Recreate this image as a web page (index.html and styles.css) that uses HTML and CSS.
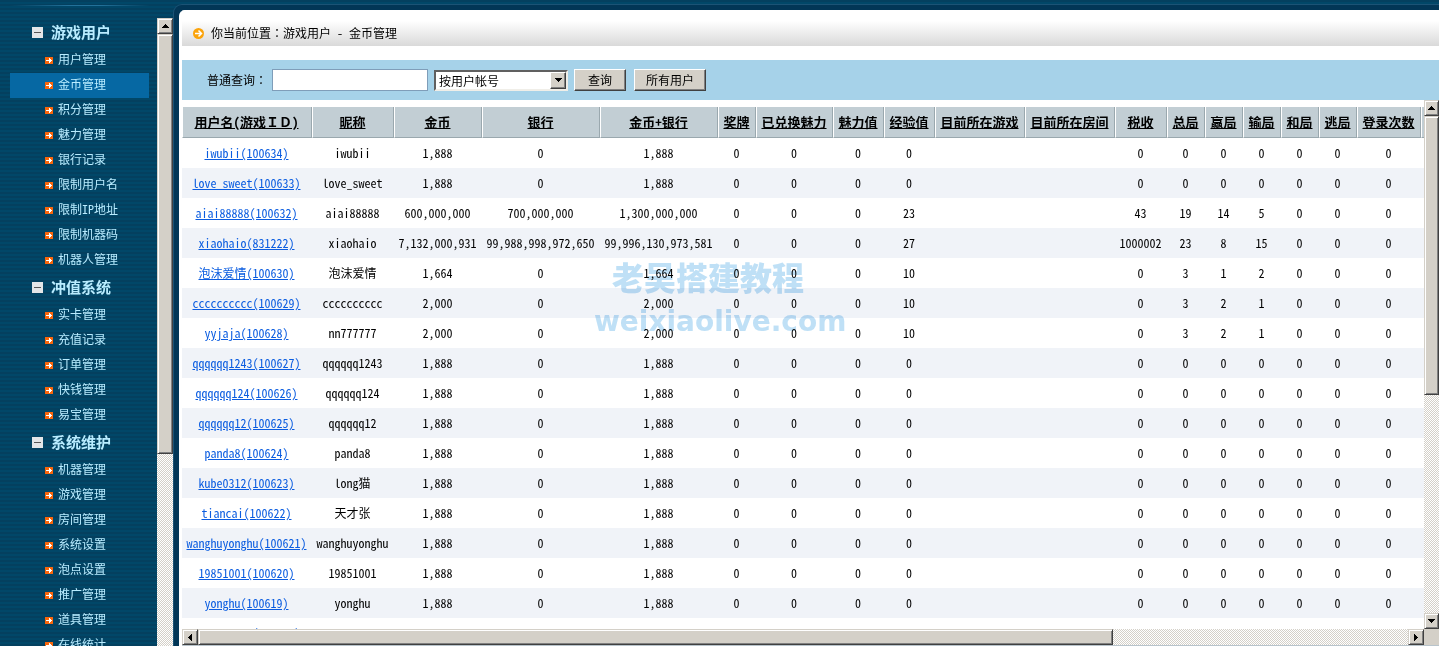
FILE: index.html
```
<!DOCTYPE html>
<html lang="zh-CN">
<head>
<meta charset="utf-8">
<title>金币管理</title>
<link rel="stylesheet" href="styles.css">
</head>
<body>
<div class="app">
  <aside class="sidebar">
    <nav class="menu" id="menu"></nav>
    <div class="vbar side-bar">
      <span class="bar-button"><svg viewBox="0 0 7 4"><path d="M3 0h1v1h1v1h1v1h1v1H0V3h1V2h1V1h1z"/></svg></span>
      <span class="side-thumb thumb"></span>
    </div>
  </aside>
  <div class="frame">
    <main class="page">
      <header class="crumb">
        <svg class="crumb-icon" viewBox="0 0 11 11"><circle cx="5.5" cy="5.5" r="5.5" fill="#fba30a"/><path d="M2 5.5h6M5.5 2.5l3 3-3 3" fill="none" stroke="#fff" stroke-width="1.5"/></svg>
        <span>你当前位置<span class="colon" lang="zh-TW">：</span>游戏用户 - 金币管理</span>
      </header>
      <form class="search" onsubmit="return false">
        <label for="q">普通查询<span class="colon" lang="zh-TW">：</span></label>
        <input class="query" id="q" type="text">
        <span class="picker">
          <select aria-label="查询方式"><option>按用户帐号</option></select>
          <span class="picker-button"><svg viewBox="0 0 7 4"><path d="M0 0h7v1H6v1H5v1H4v1H3V3H2V2H1V1H0z"/></svg></span>
        </span>
        <button class="btn" type="submit">查询</button>
        <button class="btn wide" type="button">所有用户</button>
      </form>
      <section class="pane">
        <div class="sheet">
          <table class="grid">
            <colgroup id="cols"></colgroup>
            <thead><tr id="head"></tr></thead>
            <tbody id="rows"></tbody>
          </table>
        </div>
        <div class="vbar">
          <span class="bar-button"><svg viewBox="0 0 7 4"><path d="M3 0h1v1h1v1h1v1h1v1H0V3h1V2h1V1h1z"/></svg></span>
          <span class="thumb pane-thumb"></span>
          <span class="track"></span>
          <span class="bar-button"><svg viewBox="0 0 7 4"><path d="M0 0h7v1H6v1H5v1H4v1H3V3H2V2H1V1H0z"/></svg></span>
        </div>
        <div class="hbar">
          <span class="bar-button"><svg class="side" viewBox="0 0 4 7"><path d="M4 0v7H3V6H2V5H1V4H0V3h1V2h1V1h1V0z"/></svg></span>
          <span class="thumb wide-thumb"></span>
          <span class="track"></span>
          <span class="bar-button"><svg class="side" viewBox="0 0 4 7"><path d="M0 0v7h1V6h1V5h1V4h1V3H3V2H2V1H1V0z"/></svg></span>
        </div>
        <div class="corner"></div>
      </section>
      <div class="watermark" aria-hidden="true"><span class="mark-name">老吴搭建教程</span><span class="mark-site">weixiaolive.com</span></div>
    </main>
  </div>
</div>
<script src="app.js"></script>
</body>
</html>
```
FILE: styles.css
```
* { box-sizing: border-box; }

body {
  margin: 0;
  overflow: hidden;
  font: 12px/18px "Noto Sans Mono CJK SC", "Noto Sans CJK SC", "Liberation Sans", sans-serif;
  color: #000;
}

.app {
  display: flex;
  height: 100vh;
  overflow: hidden;
  background: repeating-linear-gradient(#04405f 0 2px, #014768 2px 4px);
}
.colon { font-family: "Noto Sans Mono CJK TC", "Noto Sans CJK TC", sans-serif; }

/* sidebar */
.sidebar {
  display: flex;
  flex: none;
  width: 173px;
  padding-top: 18px;
  background: linear-gradient(90deg, transparent 10px, #23719a 70px, #23719a 100px, transparent 150px) 0 5px / 100% 1px no-repeat;
}
.menu { flex: 1; min-width: 0; padding-left: 10px; }
.group {
  display: flex;
  align-items: center;
  gap: 8px;
  height: 30px;
  margin: 0;
  padding: 0 0 2px 22px;
  font-size: 15px;
  color: #b9ecff;
}
.group svg { width: 11px; height: 11px; }
.items { list-style: none; margin: 0; padding: 0; }
.items a {
  display: flex;
  align-items: center;
  gap: 5px;
  width: 139px;
  height: 25px;
  padding: 0 0 3px 35px;
  color: #b9ecff;
  text-decoration: none;
}
.items a.current { background: #0668a3; }
.items svg { width: 8px; height: 7px; margin-top: 3px; }

/* classic scroll bars */
.vbar, .hbar, .track {
  background: repeating-conic-gradient(#fff 0 25%, #d4d0c8 0 50%) 0 0 / 2px 2px;
}
.vbar { display: flex; flex-direction: column; width: 15px; }
.side-bar { width: 16px; }
.hbar { display: flex; }
.track { flex: 1; }
.bar-button, .thumb {
  flex: none;
  background: #d4d0c8;
  border: 1px solid;
  border-color: #d4d0c8 #404040 #404040 #d4d0c8;
  box-shadow: inset 1px 1px #fff, inset -1px -1px #808080;
}
.bar-button { display: flex; align-items: center; justify-content: center; height: 16px; }
.hbar .bar-button { width: 16px; }
.bar-button svg, .picker-button svg { width: 7px; height: 4px; }
.bar-button svg.side { width: 4px; height: 7px; }
.side-thumb { height: 420px; }
.pane-thumb { height: 279px; }
.wide-thumb { width: 73.7%; }

/* main frame */
.frame {
  flex: 1;
  min-width: 0;
  margin-top: 4px;
  padding: 5px 0 0 5px;
  background: #023656;
  border: solid #1b5375;
  border-width: 1px 0 0 1px;
  border-top-left-radius: 9px;
}
.page {
  position: relative;
  display: flex;
  flex-direction: column;
  height: 100%;
  padding-left: 3px;
  overflow: hidden;
  background: #fff;
  border-top-left-radius: 6px;
}
.crumb {
  display: flex;
  align-items: center;
  gap: 7px;
  flex: none;
  height: 36px;
  padding: 10px 0 0 11px;
  background: linear-gradient(#fff 30%, #d9d9d9);
}
.crumb-icon { width: 11px; height: 11px; }
.search { display: flex; align-items: center; flex: none; height: 40px; margin-top: 14px; padding-left: 25px; background: #a6d2e9; }
.search label { padding-bottom: 1px; }
.query { width: 156px; height: 22px; margin: 0 6px 0 5px; padding: 0 3px; border: 1px solid #7f9db9; background: #fff; font: inherit; }
.picker {
  display: flex;
  position: relative;
  width: 134px;
  height: 21px;
  margin-right: 6px;
  border: 2px solid;
  border-color: #606060 #f0eee8 #f0eee8 #606060;
  background: #fff;
}
.picker select { flex: 1; padding: 0 3px; border: 0; background: none; font: inherit; color: inherit; appearance: none; line-height: 17px; }
.picker-button {
  position: absolute;
  right: 0;
  top: 0;
  bottom: 0;
  width: 16px;
  display: flex;
  align-items: center;
  justify-content: center;
  background: #d4d0c8;
  border: 1px solid;
  border-color: #fff #404040 #404040 #fff;
  box-shadow: inset -1px -1px #808080;
  pointer-events: none;
}
.btn {
  width: 52px;
  height: 22px;
  margin-right: 8px;
  padding: 0;
  border: 1px solid;
  border-color: #fff #404040 #404040 #fff;
  box-shadow: inset -1px -1px #808080;
  background: #d4d0c8;
  color: #000;
  font: inherit;
}
.btn.wide { width: 72px; }

/* data grid */
.pane { flex: 1; min-height: 0; display: grid; grid-template: minmax(0, 1fr) 16px / minmax(0, 1fr) 15px; border-bottom: 1px solid #b8c4cc; }
.sheet { overflow: hidden; padding-top: 7px; }
.grid { table-layout: fixed; width: 1360px; border-collapse: separate; border-spacing: 0; text-align: center; }
.grid th, .grid td { padding: 0 1px 0 0; height: 30px; white-space: nowrap; }
.grid th {
  height: 31px;
  padding-bottom: 1px;
  background: #c2ced4;
  border-right: 1px solid #9aa8ae;
  border-bottom: 1px solid #9aa8ae;
  border-left: 1px solid #fff;
  font-size: 13px;
}
.grid th a { color: #000; }
.grid tr:nth-child(even) td { background: #f0f3f8; }
.grid td a { color: #0a5ce0; }
.corner { background: #d4d0c8; }

.watermark {
  position: absolute;
  left: 415px;
  top: 246px;
  display: flex;
  flex-direction: column;
  color: #bfe0f6;
  mix-blend-mode: multiply;
  pointer-events: none;
}
.mark-name { padding-left: 18px; font: 900 32px/40px "Noto Sans CJK SC", sans-serif; }
.mark-site { font: bold 28px/52px "DejaVu Sans", sans-serif; }
```
FILE: app.js
```
const groups = [
  ['游戏用户', ['用户管理', '金币管理', '积分管理', '魅力管理', '银行记录', '限制用户名', '限制IP地址', '限制机器码', '机器人管理']],
  ['冲值系统', ['实卡管理', '充值记录', '订单管理', '快钱管理', '易宝管理']],
  ['系统维护', ['机器管理', '游戏管理', '房间管理', '系统设置', '泡点设置', '推广管理', '道具管理', '在线统计']]
];
const minus = '<svg viewBox="0 0 11 11"><path fill="#e4e6e8" d="M0 0h11v11H0z"/><path fill="#555" d="M2 5h7v1H2z"/></svg>';
const arrow = '<svg viewBox="0 0 8 7"><path fill="#f8660c" d="M0 0h8v7H0z"/><path fill="#fff" d="M1 3h3V1h1v1h1v1h1v1H6v1H5v1H4V4H1z"/></svg>';
document.getElementById('menu').innerHTML = groups.map(([name, items]) =>
  `<h2 class="group">${minus}${name}</h2><ul class="items">` +
  items.map(t => `<li><a href="#"${t === '金币管理' ? ' class="current"' : ''}>${arrow}${t}</a></li>`).join('') + '</ul>').join('');

const columns = [
  ['用户名(游戏ＩＤ)', 130], ['昵称', 82], ['金币', 88], ['银行', 118], ['金币+银行', 118], ['奖牌', 38],
  ['已兑换魅力', 77], ['魅力值', 51], ['经验值', 51], ['目前所在游戏', 90], ['目前所在房间', 90], ['税收', 52],
  ['总局', 38], ['赢局', 38], ['输局', 38], ['和局', 38], ['逃局', 38], ['登录次数', 64], ['', 121]
];
document.getElementById('cols').innerHTML = columns.map(c => `<col style="width:${c[1]}px">`).join('');
document.getElementById('head').innerHTML = columns.map(c => `<th>${c[0] ? `<a href="#">${c[0]}</a>` : ''}</th>`).join('');

// name, id, nickname, gold, bank, total, experience, tax, rounds, wins, losses
const users = [
  ['iwubii', 100634, 'iwubii'],
  ['love_sweet', 100633, 'love_sweet'],
  ['aiai88888', 100632, 'aiai88888', '600,000,000', '700,000,000', '1,300,000,000', 23, 43, 19, 14, 5],
  ['xiaohaio', 831222, 'xiaohaio', '7,132,000,931', '99,988,998,972,650', '99,996,130,973,581', 27, 1000002, 23, 8, 15],
  ['泡沫爱情', 100630, '泡沫爱情', '1,664', 0, '1,664', 10, 0, 3, 1, 2],
  ['cccccccccc', 100629, 'cccccccccc', '2,000', 0, '2,000', 10, 0, 3, 2, 1],
  ['yyjaja', 100628, 'nn777777', '2,000', 0, '2,000', 10, 0, 3, 2, 1],
  ['qqqqqq1243', 100627, 'qqqqqq1243'],
  ['qqqqqq124', 100626, 'qqqqqq124'],
  ['qqqqqq12', 100625, 'qqqqqq12'],
  ['panda8', 100624, 'panda8'],
  ['kube0312', 100623, 'long猫'],
  ['tiancai', 100622, '天才张'],
  ['wanghuyonghu', 100621, 'wanghuyonghu'],
  ['19851001', 100620, '19851001'],
  ['yonghu', 100619, 'yonghu'],
  ['aaaaaaaaaa', 100618, 'aaaaaaaaaa']
];
document.getElementById('rows').innerHTML = users.map(u => {
  const [name, id, nick, gold = '1,888', bank = 0, total = '1,888', exp = 0, tax = 0, all = 0, win = 0, lost = 0] = u;
  const cells = [`<a href="#">${name}(${id})</a>`, nick, gold, bank, total, 0, 0, 0, exp, '', '', tax, all, win, lost, 0, 0, 0, ''];
  return '<tr>' + cells.map(c => `<td>${c}</td>`).join('') + '</tr>';
}).join('');
```
